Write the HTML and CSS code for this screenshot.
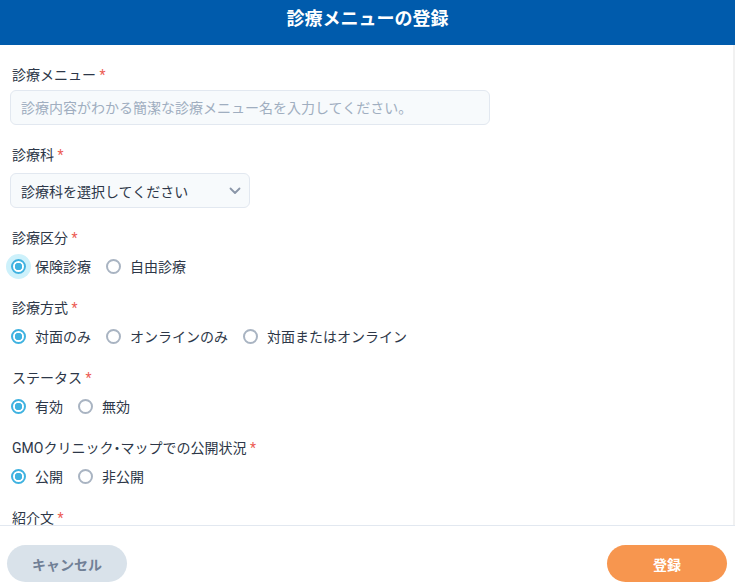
FILE: index.html
```html
<!DOCTYPE html>
<html lang="ja">
<head>
    <meta charset="UTF-8">
    <meta name="viewport" content="width=device-width, initial-scale=1.0">
    <title>診療メニューの登録</title>
    <link rel="stylesheet" href="styles.css">
</head>
<body>
    <header class="modal-header">
        <h1>診療メニューの登録</h1>
    </header>

    <div class="form-body">
        <div class="field">
            <div class="field-label label-input">診療メニュー <span class="req">*</span></div>
            <input class="text-input" type="text" placeholder="診療内容がわかる簡潔な診療メニュー名を入力してください。">
        </div>

        <div class="field">
            <div class="field-label label-select">診療科 <span class="req">*</span></div>
            <div class="select-box">
                <span>診療科を選択してください</span>
                <svg class="chevron" width="12" height="8" viewBox="0 0 12 8">
                    <path d="M1.5 1.5 L6 6 L10.5 1.5" fill="none" stroke="#8a96a8" stroke-width="1.8" stroke-linecap="round" stroke-linejoin="round"/>
                </svg>
            </div>
        </div>

        <div class="field">
            <div class="field-label">診療区分 <span class="req">*</span></div>
            <div class="radio-row">
                <label class="radio"><input type="radio" name="kubun" class="focused" checked><span>保険診療</span></label>
                <label class="radio"><input type="radio" name="kubun"><span>自由診療</span></label>
            </div>
        </div>

        <div class="field">
            <div class="field-label">診療方式 <span class="req">*</span></div>
            <div class="radio-row">
                <label class="radio"><input type="radio" name="hoshiki" checked><span>対面のみ</span></label>
                <label class="radio"><input type="radio" name="hoshiki"><span>オンラインのみ</span></label>
                <label class="radio"><input type="radio" name="hoshiki"><span>対面またはオンライン</span></label>
            </div>
        </div>

        <div class="field">
            <div class="field-label">ステータス <span class="req">*</span></div>
            <div class="radio-row">
                <label class="radio"><input type="radio" name="status" checked><span>有効</span></label>
                <label class="radio"><input type="radio" name="status"><span>無効</span></label>
            </div>
        </div>

        <div class="field">
            <div class="field-label">GMOクリニック<span class="narrow">・</span>マップでの公開状況 <span class="req">*</span></div>
            <div class="radio-row">
                <label class="radio"><input type="radio" name="public" checked><span>公開</span></label>
                <label class="radio"><input type="radio" name="public"><span>非公開</span></label>
            </div>
        </div>

        <div class="field">
            <div class="field-label">紹介文 <span class="req">*</span></div>
        </div>
    </div>

    <footer class="modal-footer">
        <button class="btn btn-cancel">キャンセル</button>
        <button class="btn btn-submit">登録</button>
    </footer>
</body>
</html>
```

FILE: styles.css
```css
* {
    box-sizing: border-box;
}
body {
    margin: 0;
    font-family: Roboto, "Noto Sans CJK JP", sans-serif;
    color: #2d3748;
    background-color: #fff;
    height: 587px;
    display: flex;
    flex-direction: column;
    overflow: hidden;
}
.modal-header {
    background-color: #005bac;
    height: 45px;
    padding-top: 7px;
    text-align: center;
}
.modal-header h1 {
    margin: 0;
    font-size: 18px;
    line-height: 24px;
    font-weight: bold;
    color: #fff;
}
.form-body {
    flex: 1;
    overflow: hidden;
    padding: 20px 12px 0 12px;
    border-right: 2px solid #f1f1f1;
}
.field {
    margin-bottom: 20px;
}
.field-label {
    font-size: 14px;
    line-height: 20px;
    margin-bottom: 6px;
}
.narrow {
    font-feature-settings: "palt";
}
.label-input {
    margin-bottom: 5px;
}
.label-select {
    margin-bottom: 8px;
}
.req {
    color: #ec5b52;
}
.text-input {
    display: block;
    width: 480px;
    height: 35px;
    margin-left: -2px;
    padding: 0 10px;
    font-family: inherit;
    font-size: 14px;
    color: #2d3748;
    background-color: #f7fafc;
    border: 1px solid #e2e8f0;
    border-radius: 6px;
    outline: none;
}
.text-input::placeholder {
    color: #a0aec0;
}
.select-box {
    display: flex;
    align-items: center;
    justify-content: space-between;
    width: 240px;
    height: 35px;
    margin-left: -2px;
    padding: 0 8px 0 10px;
    font-size: 14px;
    background-color: #f7fafc;
    border: 1px solid #e2e8f0;
    border-radius: 6px;
}
.radio-row {
    display: flex;
    align-items: center;
    height: 24px;
    gap: 16px;
}
.radio {
    display: flex;
    align-items: center;
    gap: 9px;
    font-size: 14px;
    cursor: pointer;
}
.radio input {
    appearance: none;
    -webkit-appearance: none;
    margin: 0 0 0 -1px;
    width: 15px;
    height: 15px;
    border: 2px solid #a9b4c2;
    border-radius: 50%;
    background-color: #fff;
}
.radio input:checked {
    border-color: #3fb2e0;
    background: radial-gradient(circle, #3fb2e0 0, #3fb2e0 3.5px, #fff 4px);
}
.radio input.focused {
    box-shadow: 0 0 0 5px #cdf1fb;
}
.modal-footer {
    height: 62px;
    border-top: 1px solid #e2e8f0;
    display: flex;
    justify-content: space-between;
    padding: 19px 8px 0 7px;
}
.btn {
    width: 120px;
    height: 37px;
    border: none;
    border-radius: 19px;
    font-family: inherit;
    font-size: 14px;
    font-weight: bold;
    cursor: pointer;
}
.btn-cancel {
    background-color: #d9e2ea;
    color: #718096;
}
.btn-submit {
    background-color: #f7964f;
    color: #fff;
}
```
